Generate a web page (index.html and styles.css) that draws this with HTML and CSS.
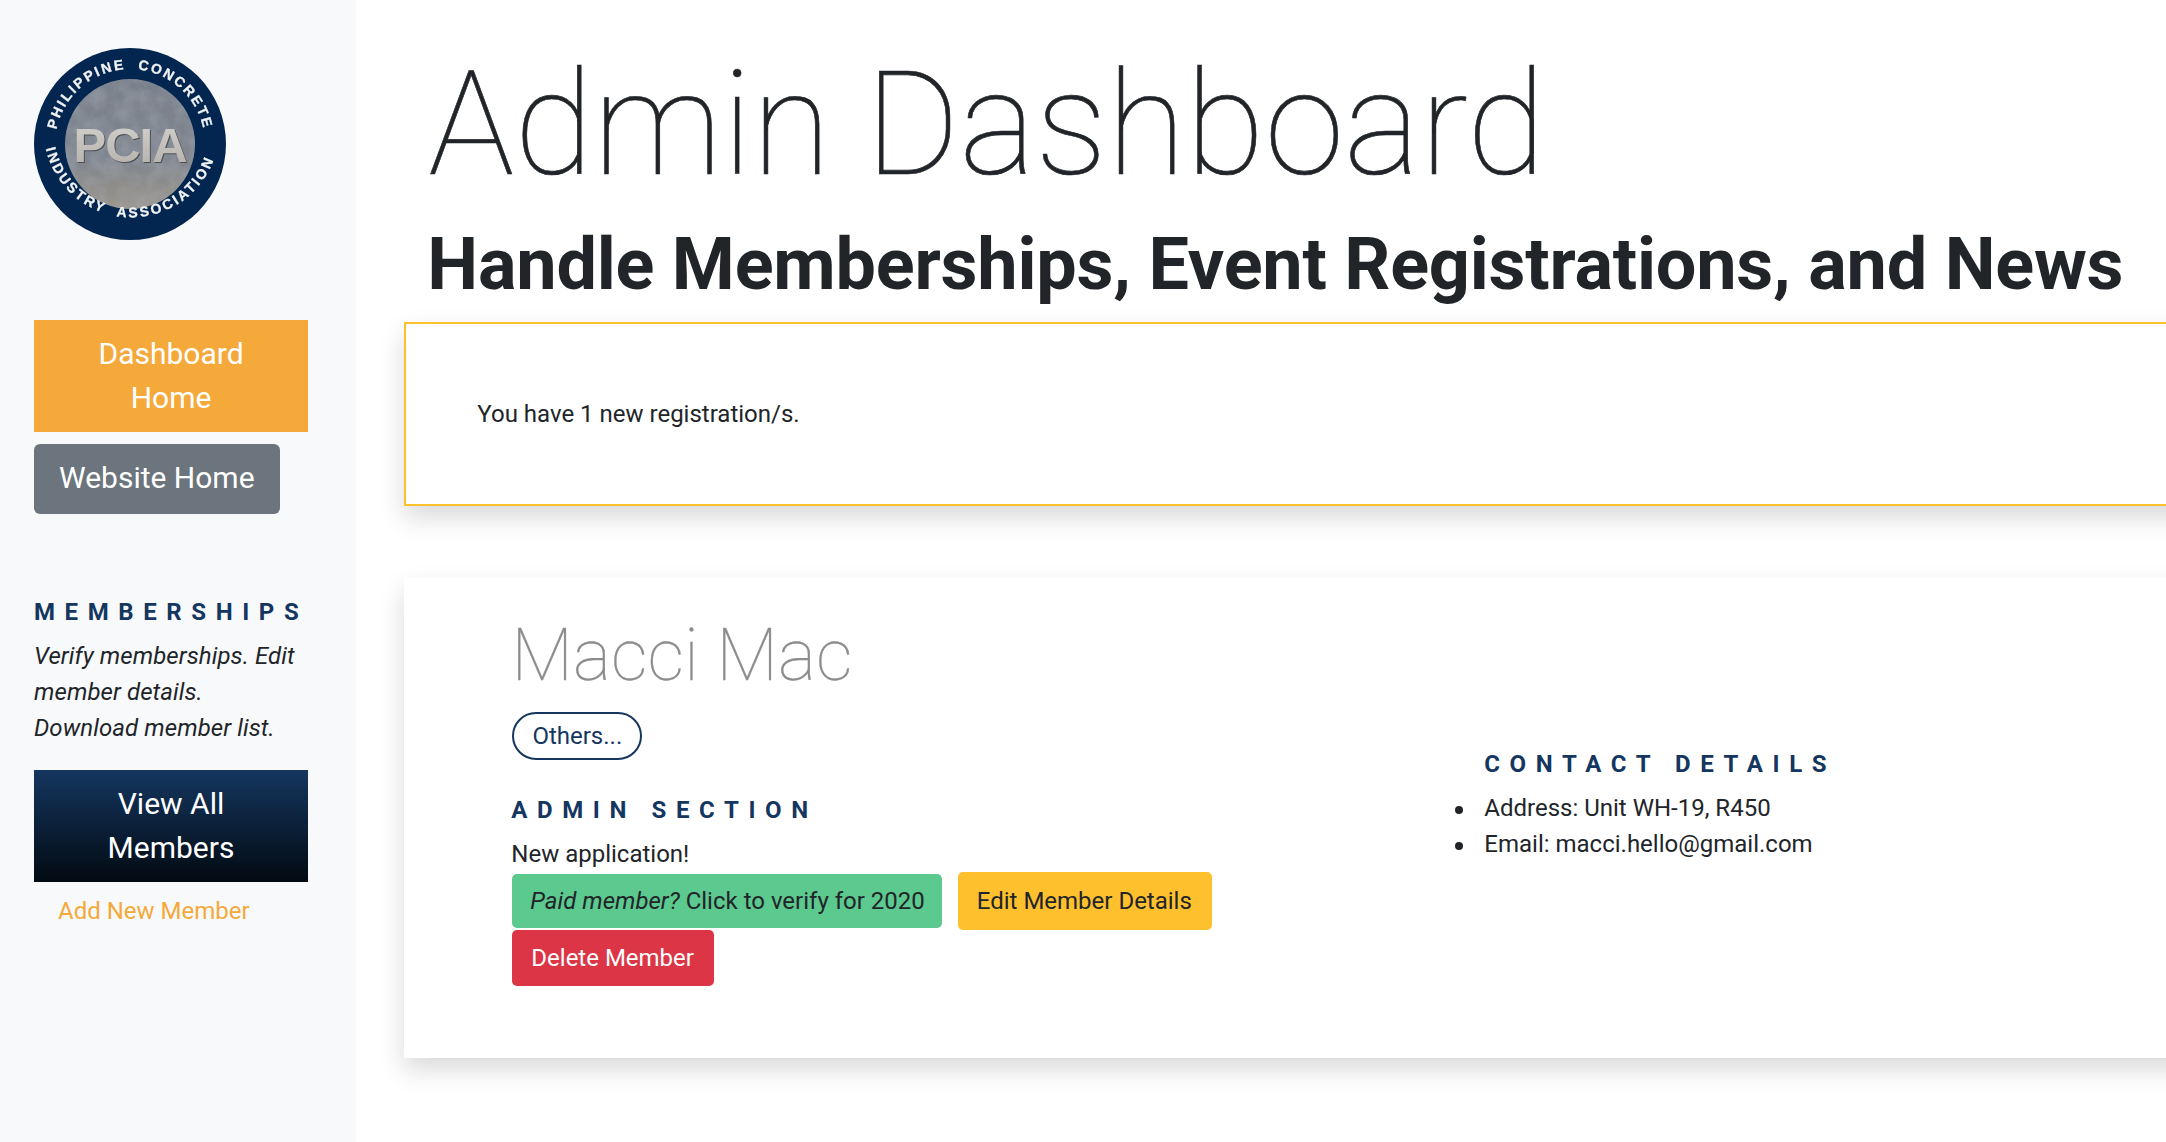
FILE: index.html
```html
<!DOCTYPE html>
<html lang="en">
<head>
<meta charset="utf-8">
<title>Admin Dashboard</title>
<link rel="stylesheet" href="styles.css">
</head>
<body>
<div class="page">
  <aside class="sidebar">
    <svg class="logo" viewBox="0 0 192 192" role="img" aria-label="PCIA logo">
      <defs>
        <filter id="concrete" x="0" y="0" width="100%" height="100%">
          <feTurbulence type="fractalNoise" baseFrequency="0.07" numOctaves="4" seed="4"/>
          <feColorMatrix type="matrix" values="0 0 0 0 0.38  0 0 0 0 0.4  0 0 0 0 0.44  0.7 0 0 0 -0.2"/>
          <feComposite in2="SourceGraphic" operator="in" result="noise"/>
          <feMerge><feMergeNode in="SourceGraphic"/><feMergeNode in="noise"/></feMerge>
        </filter>
        <linearGradient id="stone" x1="0" y1="0" x2="0" y2="1">
          <stop offset="0" stop-color="#78808b"/>
          <stop offset="0.62" stop-color="#808690"/>
          <stop offset="0.84" stop-color="#8f8d89"/>
          <stop offset="1" stop-color="#9c9890"/>
        </linearGradient>
        <linearGradient id="letters" x1="0" y1="0" x2="0" y2="1">
          <stop offset="0" stop-color="#d4d2cf"/>
          <stop offset="1" stop-color="#b3afa9"/>
        </linearGradient>
        <path id="arcTop" d="M 22.1 109 A 75 75 0 1 1 169.9 109"/>
        <path id="arcBottom" d="M 9.9 80 A 87.5 87.5 0 0 0 184.5 90"/>
      </defs>
      <circle class="logo-ring" cx="96" cy="96" r="96"/>
      <circle cx="96" cy="96" r="65" fill="url(#stone)" filter="url(#concrete)"/>
      <text class="logo-mark" x="96" y="114" text-anchor="middle" fill="url(#letters)">PCIA</text>
      <text class="logo-arc"><textPath href="#arcTop" startOffset="50%" text-anchor="middle">PHILIPPINE  CONCRETE</textPath></text>
      <text class="logo-arc logo-arc-low"><textPath href="#arcBottom" startOffset="50%" text-anchor="middle">INDUSTRY  ASSOCIATION</textPath></text>
    </svg>
    <a class="side-btn side-btn-orange">Dashboard Home</a>
    <a class="btn-grey">Website Home</a>
    <h6 class="side-title">MEMBERSHIPS</h6>
    <p class="side-text">Verify memberships. Edit member details.<br>Download member list.</p>
    <a class="side-btn side-btn-navy">View All Members</a>
    <a class="side-link">Add New Member</a>
  </aside>
  <main class="main">
    <h1 class="title">Admin Dashboard</h1>
    <h2 class="subtitle">Handle Memberships, Event Registrations, and News</h2>
    <section class="card card-notice">
      <p class="notice-text">You have 1 new registration/s.</p>
    </section>
    <section class="card card-member">
      <div class="col-left">
        <h3 class="member-name">Macci Mac</h3>
        <span class="pill">Others...</span>
        <h6 class="section-title">ADMIN SECTION</h6>
        <p class="status">New application!</p>
        <div class="actions">
          <a class="btn btn-green"><em>Paid member?</em> Click to verify for 2020</a>
          <a class="btn btn-yellow">Edit Member Details</a>
          <a class="btn btn-red">Delete Member</a>
        </div>
      </div>
      <div class="col-right">
        <h6 class="section-title contact-title">CONTACT DETAILS</h6>
        <ul class="contact-list">
          <li>Address: Unit WH-19, R450</li>
          <li>Email: macci.hello@gmail.com</li>
        </ul>
      </div>
    </section>
  </main>
</div>
</body>
</html>
```
FILE: styles.css
```css
* { box-sizing: border-box; }
html, body { margin: 0; padding: 0; height: 100%; overflow: hidden; background: #fff; }
body { font-family: Roboto, "Liberation Sans", sans-serif; font-size: 24px; line-height: 36px; color: #212529; }
.page { display: flex; width: 2166px; height: 1142px; overflow: hidden; }
.sidebar { flex: 0 0 356px; background: #f8f9fa; padding: 48px 48px 0 34px; position: relative; z-index: 1; }
.logo { display: block; width: 192px; height: 192px; margin-bottom: 80px; filter: blur(0.4px); }
.logo-ring { fill: #02264f; }
.logo-arc { font-family: "Liberation Sans", sans-serif; font-weight: 700; font-size: 14px; letter-spacing: 2.1px; fill: #f2f3f5; stroke: #f2f3f5; stroke-width: 0.3px; white-space: pre; }
.logo-arc-low { letter-spacing: 2.5px; }
.logo-mark { font-family: "Liberation Sans", sans-serif; font-weight: 700; font-size: 49px; letter-spacing: -1px; filter: drop-shadow(1px 1.5px 0.6px #4c4f53); }
.side-btn { display: block; width: 274px; padding: 12px 24px; font-size: 30px; line-height: 44px; color: #fff; text-align: center; }
.side-btn-orange { background: #f4a93a; }
.side-btn-navy { background: linear-gradient(180deg, #14365f 0%, #020a12 100%); }
.btn-grey { display: block; width: 246px; height: 70px; margin-top: 12px; padding: 12px 25px; background: #6c757d; border-radius: 6px; color: #fff; font-size: 30px; line-height: 44px; white-space: nowrap; }
.side-title { margin: 80px 0 0; font-size: 24px; line-height: 36px; font-weight: 700; letter-spacing: 9.6px; color: #14365f; white-space: nowrap; }
.side-text { margin: 8px 0 24px; font-style: italic; letter-spacing: 0.08px; }
.side-link { display: block; margin: 11px 0 0 24px; color: #f4a93a; white-space: nowrap; }
.main { flex: 1 1 auto; min-width: 0; padding: 39px 0 0 48px; }
.title { margin: 0 0 0 24px; font-size: 144px; line-height: 172px; font-weight: 100; -webkit-text-stroke: 0.6px #212529; white-space: nowrap; }
.subtitle { margin: 11px 0 0 23px; font-size: 72px; line-height: 86px; font-weight: 700; letter-spacing: -0.22px; white-space: nowrap; }
.card { margin-right: -60px; background: #fff; box-shadow: 0 12px 24px rgba(0, 0, 0, 0.15); }
.card-notice { height: 184px; margin-top: 14px; padding: 72px 71px 0; border: 2px solid #ffc02d; }
.notice-text { margin: 0; }
.card-member { display: flex; height: 480px; margin-top: 72px; padding: 35px 0 0 107px; }
.col-left { flex: 0 0 973px; }
.col-right { flex: 1 1 auto; padding-top: 133px; }
.member-name { margin: 0; font-size: 72px; line-height: 86px; font-weight: 100; -webkit-text-stroke: 0.3px #8c8c8c; color: #8c8c8c; white-space: nowrap; }
.pill { display: inline-block; width: 130px; height: 48px; margin: 13px 0 0 1px; border: 2px solid #14365f; border-radius: 24px; color: #14365f; text-align: center; line-height: 44px; }
.section-title { margin: 0; font-size: 24px; line-height: 36px; font-weight: 700; letter-spacing: 9.6px; color: #14365f; white-space: nowrap; }
.col-left .section-title { margin-top: 32px; }
.status { margin: 8px 0 0; }
.actions { display: flex; flex-wrap: wrap; align-items: center; column-gap: 16px; width: 720px; margin-left: 1px; }
.btn { display: block; padding: 9px 18px; border-radius: 5px; white-space: nowrap; line-height: 36px; }
.btn-green { background: #5cc98f; height: 54px; padding-right: 17px; }
.btn-yellow { background: #ffc02d; height: 58px; padding: 11px 20px 11px 19px; }
.btn-red { background: #dc3545; color: #fff; height: 56px; padding: 10px 20px 10px 19px; }
.contact-list { margin: 8px 0 0 -29px; padding: 0; list-style: none; }
.contact-list li { display: flex; align-items: center; }
.contact-list li::before { content: ""; flex: 0 0 8px; height: 8px; margin: 4px 21px 0 0; border-radius: 50%; background: #212529; }
```
